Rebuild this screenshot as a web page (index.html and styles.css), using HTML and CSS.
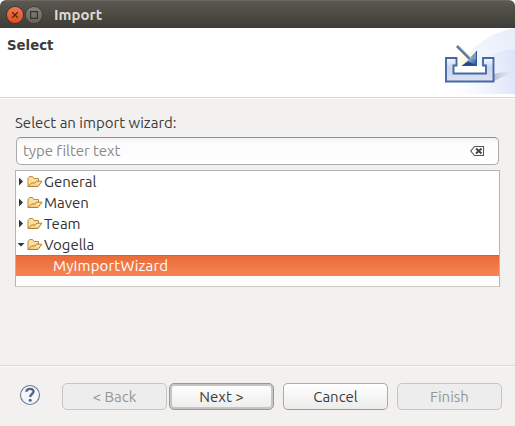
FILE: index.html
```html
<!DOCTYPE html>
<html lang="en">
<head>
<meta charset="utf-8">
<title>Import</title>
<link rel="stylesheet" href="styles.css">
</head>
<body>
<svg class="defs" width="0" height="0">
  <defs>
    <linearGradient id="folderFront" x1="0" y1="0" x2="0" y2="1"><stop offset="0" stop-color="#fff0b8"/><stop offset="1" stop-color="#f0c873"/></linearGradient>
    <symbol id="folder" viewBox="0 0 16 14">
      <path d="M1 11.500V3.500L2.500 1.500H5.500L7 3.500H11.500V7" fill="#f9dfa0" stroke="#bd8a3e"/>
      <path d="M1 11.500L4.500 8H8L9.500 6.200H15L11 11.500Z" fill="url(#folderFront)" stroke="#b87d30" stroke-linejoin="round"/>
    </symbol>
  </defs>
</svg>
<div class="window">
  <header class="titlebar">
    <span class="control close"><svg width="8" height="8" viewBox="0 0 8 8"><path d="M1.200 1.200L6.800 6.800M6.800 1.200L1.200 6.800" stroke="#57291b" stroke-width="1.400"/></svg></span>
    <span class="control maximize"><svg width="8" height="8" viewBox="0 0 8 8"><rect x=".6" y=".6" width="6.800" height="6.800" fill="none" stroke="#33322e" stroke-width="1.200"/></svg></span>
    <h1 class="window-title">Import</h1>
  </header>
  <section class="banner">
    <h2 class="banner-title">Select</h2>
    <svg class="banner-art" width="75" height="66" viewBox="0 0 75 66">
      <defs>
        <linearGradient id="sky" x1="0" y1="1" x2="1" y2="0"><stop offset="0.1" stop-color="#fff"/><stop offset=".5" stop-color="#f3f6fd"/><stop offset="1" stop-color="#e6ecfa"/></linearGradient>
        <linearGradient id="sky2"><stop offset="0" stop-color="#fff" stop-opacity="0"/><stop offset="1" stop-color="#d5dff6"/></linearGradient>
        <linearGradient id="tray" x1="0" y1="0" x2="0" y2="1"><stop offset="0" stop-color="#f8faff"/><stop offset=".4" stop-color="#c9d6ee"/><stop offset="1" stop-color="#dce2ef"/></linearGradient>
        <linearGradient id="arrow" x1="0" y1="0" x2="1" y2="1"><stop offset="0.2" stop-color="#d6e8f7"/><stop offset="1" stop-color="#1d478a"/></linearGradient>
        <radialGradient id="glow"><stop offset="0" stop-color="#fff7b8"/><stop offset="1" stop-color="#fffbd9" stop-opacity=".3"/></radialGradient>
        <linearGradient id="shade"><stop offset="0" stop-color="#9b90b5" stop-opacity=".6"/><stop offset="1" stop-color="#d9cfdf" stop-opacity="0"/></linearGradient>
      </defs>
      <path d="M13 66C15 35 35 8 75 0V66Z" fill="url(#sky)"/>
      <path d="M2 66C20 42 48 22 75 21V66Z" fill="url(#sky2)" opacity=".7"/>
      <circle cx="26" cy="32" r="10" fill="url(#glow)" opacity=".7"/>
      <path d="M14 37H46V45H14Z" fill="#fff"/>
      <path d="M54 53L73 44Q66 43 54 46Z" fill="url(#shade)"/>
      <path d="M6 30H16.500V37.500H13.500V45.500H46V37.500H43V30H53.500V53.500H6Z" fill="url(#tray)" stroke="#4569a7" stroke-width="1.900"/>
      <path d="M17 18L30 31" stroke="#54719f" stroke-width="2.600"/>
      <path d="M18 18L31 31" stroke="#8fa5c8" stroke-width=".7"/>
      <path d="M37 23V38H22Z" fill="url(#arrow)"/>
      <path d="M36.500 23V32L31 29Z" fill="#7b9dca"/>
      <path d="M22 37.500L28 33.500L36.500 37.500Z" fill="#1d478a"/>
      <path d="M22 37.500H36.500V23" fill="none" stroke="#2b5596"/>
    </svg>
  </section>
  <main class="content">
    <label class="prompt">Select an import wizard:</label>
    <div class="filter">
      <span class="placeholder">type filter text</span>
      <svg width="15" height="12" viewBox="0 0 15 12"><path d="M4.500 1.500H13.500V10.500H4.500L.8 6Z" fill="#fff" stroke="#555" stroke-width="1.100"/><path d="M6 3.500L11.500 8.500M11.500 3.500L6 8.500" stroke="#444" stroke-width="2"/></svg>
    </div>
    <div class="tree">
      <div class="row"><i class="twist"></i><svg class="folder"><use href="#folder"/></svg><span>General</span></div>
      <div class="row"><i class="twist"></i><svg class="folder"><use href="#folder"/></svg><span>Maven</span></div>
      <div class="row"><i class="twist"></i><svg class="folder"><use href="#folder"/></svg><span>Team</span></div>
      <div class="row"><i class="twist open"></i><svg class="folder"><use href="#folder"/></svg><span>Vogella</span></div>
      <div class="row selected"><span>MyImportWizard</span></div>
    </div>
  </main>
  <footer class="actions">
    <svg class="help" width="22" height="22" viewBox="0 0 22 22">
      <circle cx="11" cy="11" r="9.500" fill="#f5f6f9" stroke="#65799a" stroke-width="1.100"/>
      <path d="M7.400 7.800C7.600 3.800 14.700 3.900 14.500 7.700C14.300 10 11.200 10.100 11.200 13" fill="none" stroke="#536687" stroke-width="2.400"/>
      <circle cx="11.200" cy="16.200" r="1.500" fill="#536687"/>
    </svg>
    <button class="btn" disabled>&lt; Back</button>
    <button class="btn default">Next &gt;</button>
    <button class="btn spaced">Cancel</button>
    <button class="btn spaced" disabled>Finish</button>
  </footer>
</div>
</body>
</html>
```

FILE: styles.css
```css
* { box-sizing: border-box; }
body { margin: 0; background: #fff; font: 15px/21px "Ubuntu", "Noto Sans", sans-serif; font-variant-ligatures: none; color: #3c3c3c; }
.defs { position: absolute; }
.window { width: 515px; height: 426px; display: flex; flex-direction: column; background: #f2f1ef; overflow: hidden; border-radius: 6px 6px 0 0; }
.titlebar { height: 28px; flex: none; display: flex; align-items: center; padding: 0 0 0 7px; background: linear-gradient(#5c5a53, #56544c 15%, #3d3c37); border-top: 1px solid #6a6861; }
.control { width: 16px; height: 16px; border-radius: 50%; margin-right: 3px; display: flex; align-items: center; justify-content: center; }
.close { background: linear-gradient(#f27950, #df4d20); box-shadow: 0 0 0 1px #45352e; }
.maximize { background: linear-gradient(#85837a, #65635b); box-shadow: 0 0 0 1px #3e3d38; }
.window-title { margin: 1px 0 0 9px; font-size: 15px; line-height: 20px; font-weight: 700; color: #dfdbd2; }
.banner { height: 70px; flex: none; display: flex; justify-content: space-between; background: #fff; border-bottom: 1px solid #d9d8d6; }
.banner-title { margin: 7px 0 0 7px; font: 700 13.300px/21px "DejaVu Sans", sans-serif; color: #3c3c3c; }
.banner-art { display: block; flex: none; }
.content { height: 267px; flex: none; padding: 13px 15px 0; border-top: 1px solid #fbfbfa; }
.prompt { display: block; height: 25px; line-height: 21px; white-space: nowrap; }
.filter { height: 28px; margin: 0 1px 5px; padding: 0 13px 0 6px; display: flex; align-items: center; justify-content: space-between; border: 1px solid #aaa; border-top-color: #8f8f8f; border-radius: 5px; background: linear-gradient(#f3f3f3, #fcfcfc 25%, #fff); color: #8b8984; }
.placeholder { padding-bottom: 2px; letter-spacing: -.07px; }
.tree { height: 117px; border: 1px solid #b7b5b2; border-bottom-color: #d0ccc8; background: #fff; }
.row { height: 21px; display: flex; align-items: center; color: #333; white-space: nowrap; }
.twist { width: 4px; height: 8px; margin: 0 4px 0 3px; background: #333; clip-path: polygon(0 0, 100% 50%, 0 100%); flex: none; }
.twist.open { width: 8px; height: 4px; margin: 0 2px 0 1px; clip-path: polygon(0 0, 100% 0, 50% 100%); }
.folder { width: 16px; height: 14px; margin-right: 1px; flex: none; }
.selected { padding-left: 37px; background: linear-gradient(#db622f 0 1px, #e96c3a 1px, #f88453); color: #fff; letter-spacing: .15px; }
.actions { height: 61px; flex: none; display: flex; align-items: flex-start; padding: 17px 0 0 19px; border-top: 1px solid #d9d7d4; box-shadow: inset 0 1px #fbfaf9; }
.help { margin: 1px 21px 0 0; }
.btn { width: 105px; height: 27px; padding: 0; margin: 0 2px 0 0; font: inherit; color: #3c3c3c; border: 1px solid #aaa; border-bottom-color: #999; border-radius: 5px; background: linear-gradient(#fff, #ececeb); display: flex; align-items: center; justify-content: center; white-space: nowrap; }
.btn:disabled { color: #989692; background: #ededed; border-color: #c6c5c3; }
.btn.default { border-color: #999; box-shadow: inset 0 0 0 2px #c5c5c4; }
.btn.spaced { margin-left: 7px; }
```
